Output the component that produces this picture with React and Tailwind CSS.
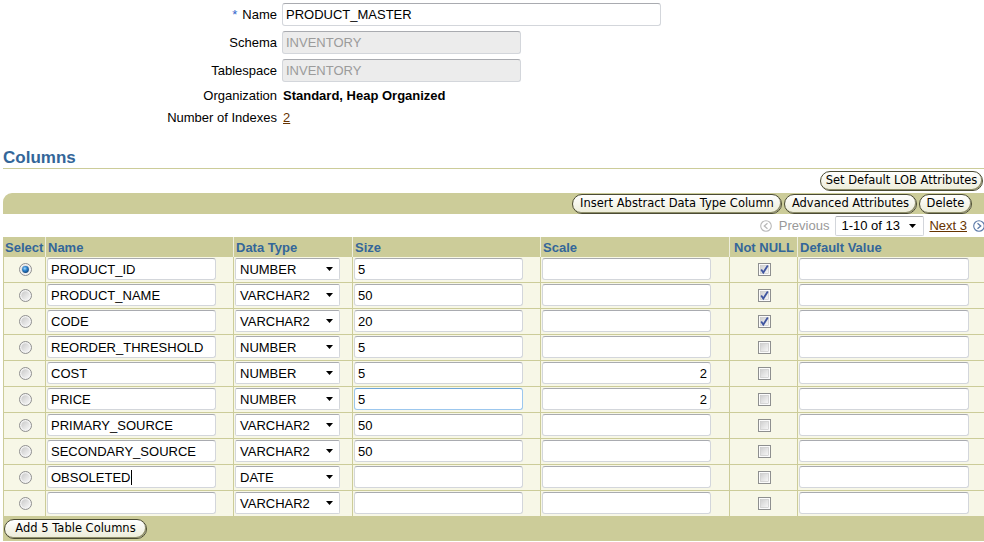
import React from "react";

const rows = [
  { name: "PRODUCT_ID", type: "NUMBER", size: "5", scale: "", nn: true, sel: true },
  { name: "PRODUCT_NAME", type: "VARCHAR2", size: "50", scale: "", nn: true },
  { name: "CODE", type: "VARCHAR2", size: "20", scale: "", nn: true },
  { name: "REORDER_THRESHOLD", type: "NUMBER", size: "5", scale: "" },
  { name: "COST", type: "NUMBER", size: "5", scale: "2" },
  { name: "PRICE", type: "NUMBER", size: "5", scale: "2", focus: true },
  { name: "PRIMARY_SOURCE", type: "VARCHAR2", size: "50", scale: "" },
  { name: "SECONDARY_SOURCE", type: "VARCHAR2", size: "50", scale: "" },
  { name: "OBSOLETED", type: "DATE", size: "", scale: "", cursor: true },
  { name: "", type: "VARCHAR2", size: "", scale: "" },
];

function Box({ w, h = "h-[22px]", value, right, focus, disabled, cursor }) {
  const border = focus
    ? "border-[#9cc7ee] border-t-[#6ea6d8]"
    : "border-[#d3d6db] border-t-[#a9abb0]";
  const bg = disabled ? "bg-[#ececec] text-[#9b9b9b]" : "bg-white text-black";
  return (
    <div
      className={`${w} ${h} ${border} ${bg} border rounded-[3px] flex items-center px-[3px] ${right ? "justify-end" : "justify-start"}`}
    >
      <span className="whitespace-pre">{value}</span>
      {cursor && <span className="w-px h-[15px] bg-black ml-px" />}
    </div>
  );
}

function Arrow() {
  return (
    <svg width="8" height="4" viewBox="0 0 8 4" className="shrink-0">
      <path d="M0 0 H7 L3.5 4 Z" fill="#000" />
    </svg>
  );
}

function Select({ w, value }) {
  return (
    <div className={`${w} h-[22px] border border-[#d3d6db] border-t-[#a9abb0] rounded-[2px] bg-white flex items-center justify-between pl-[4px] pr-[5px]`}>
      <span>{value}</span>
      <Arrow />
    </div>
  );
}

function Radio({ sel, id }) {
  return (
    <svg width="13" height="13" viewBox="0 0 13 13">
      <defs>
        <linearGradient id={`rg${id}`} x1="0" y1="0" x2="1" y2="1">
          <stop offset="0" stopColor="#c9c9c9" />
          <stop offset="1" stopColor="#f7f7f7" />
        </linearGradient>
        <radialGradient id={`rs${id}`} cx="0.4" cy="0.35" r="0.7">
          <stop offset="0" stopColor="#a6dcff" />
          <stop offset="0.45" stopColor="#2d84cf" />
          <stop offset="1" stopColor="#0f3f73" />
        </radialGradient>
      </defs>
      <circle cx="6.5" cy="6.5" r="6" fill="#f3f3f3" stroke="#8f8f8f" />
      <circle cx="6.5" cy="6.5" r="4.2" fill={`url(#rg${id})`} />
      {sel && <circle cx="6.5" cy="6.5" r="3.4" fill={`url(#rs${id})`} />}
    </svg>
  );
}

function Check({ on, id }) {
  return (
    <svg width="13" height="13" viewBox="0 0 13 13">
      <defs>
        <linearGradient id={`cg${id}`} x1="0" y1="0" x2="1" y2="1">
          <stop offset="0" stopColor="#cfcfcf" />
          <stop offset="1" stopColor="#f8f8f8" />
        </linearGradient>
      </defs>
      <rect x="0.5" y="0.5" width="12" height="12" fill="#fbfbfb" stroke="#8e8f8f" />
      <rect x="2.5" y="2.5" width="8" height="8" fill={`url(#cg${id})`} stroke="#c4c4c4" strokeWidth="0.6" />
      {on && (
        <path d="M3.2 6.6 L5.3 9.6 L9.8 2.6" fill="none" stroke="#3f55a0" strokeWidth="1.8" />
      )}
    </svg>
  );
}

function Btn({ w, children }) {
  return (
    <div
      className={`${w} h-[20px] shrink-0 rounded-full border border-[#4b4b33] bg-linear-to-b from-[#ffffff] to-[#ececd8] shadow-[inset_-1px_-1px_0_#8f8f6a] flex items-center justify-center font-['DejaVu_Sans',Verdana,sans-serif] text-[11.5px] text-black`}
    >
      {children}
    </div>
  );
}

function CircleIcon({ dir, color }) {
  return (
    <svg width="12" height="12" viewBox="0 0 12 12" className="shrink-0">
      <circle cx="6" cy="6" r="5.3" fill="none" stroke={color} strokeWidth="1.1" />
      {dir === "left" ? (
        <path d="M7.5 3.3 L4.3 6 L7.5 8.7" fill="none" stroke={color} strokeWidth="1.3" />
      ) : (
        <path d="M4.5 3.3 L7.7 6 L4.5 8.7" fill="none" stroke={color} strokeWidth="1.3" />
      )}
    </svg>
  );
}

function FormRow({ label, h, children }) {
  return (
    <div className={`flex items-center gap-[5px] ${h}`}>
      <div className="w-[277px] text-right whitespace-nowrap">{label}</div>
      {children}
    </div>
  );
}

export default function App() {
  return (
    <div className="w-[984px] h-[542px] overflow-hidden bg-white text-black font-['Liberation_Sans',Arial,sans-serif] text-[13px] leading-none">
      {/* Form */}
      <div className="flex flex-col">
        <FormRow
          h="h-[28px]"
          label={
            <>
              <span className="text-[#3366cc] mr-[5px]">*</span>Name
            </>
          }
        >
          <Box w="w-[379px]" h="h-[23px]" value="PRODUCT_MASTER" />
        </FormRow>
        <FormRow h="h-[28px]" label="Schema">
          <Box w="w-[239px]" h="h-[23px]" value="INVENTORY" disabled />
        </FormRow>
        <FormRow h="h-[28px]" label="Tablespace">
          <Box w="w-[239px]" h="h-[23px]" value="INVENTORY" disabled />
        </FormRow>
        <FormRow h="h-[23px]" label="Organization">
          <span className="font-bold pl-[1px]">Standard, Heap Organized</span>
        </FormRow>
        <FormRow h="h-[21px]" label="Number of Indexes">
          <span className="underline text-[#663300] pl-[1px]">2</span>
        </FormRow>
      </div>

      {/* Section heading */}
      <div className="mt-[20px] ml-[3px] h-[21px] border-b border-[#cccc99] flex items-center">
        <h2 className="text-[17px] font-bold text-[#336699] leading-[20px]">Columns</h2>
      </div>

      {/* Top buttons */}
      <div className="mt-[2px] flex justify-end pr-[1px]">
        <Btn w="w-[163px]">Set Default LOB Attributes</Btn>
      </div>
      <div className="mt-[2px] ml-[3px] h-[21px] bg-[#cccc99] rounded-tl-[9px] flex items-center justify-end gap-[2px] pr-[12px]">
        <Btn w="w-[210px]">Insert Abstract Data Type Column</Btn>
        <Btn w="w-[133px]">Advanced Attributes</Btn>
        <Btn w="w-[53px]">Delete</Btn>
      </div>

      {/* Pagination */}
      <div className="h-[23px] flex items-center justify-end mr-[-1px]">
        <CircleIcon dir="left" color="#b9b9b9" />
        <span className="ml-[7px] text-[#999999]">Previous</span>
        <div className="ml-[6px] w-[89px] h-[20px] border border-[#d3d6db] border-t-[#a9abb0] rounded-[2px] bg-white flex items-center justify-between pl-[5px] pr-[6px]">
          <span>1-10 of 13</span>
          <Arrow />
        </div>
        <span className="ml-[5px] underline text-[#663300]">Next 3</span>
        <span className="ml-[6px]">
          <CircleIcon dir="right" color="#5b79a8" />
        </span>
      </div>

      {/* Table */}
      <div className="ml-[3px]">
        <div className="h-[20px] flex bg-[#cccc99] text-[#336699] font-bold">
          <div className="w-[42px] pl-[2px] flex items-center">Select</div>
          <div className="w-[188px] border-l border-[#eeeedd] pl-[2px] flex items-center">Name</div>
          <div className="w-[119px] border-l border-[#eeeedd] pl-[2px] flex items-center">Data Type</div>
          <div className="w-[188px] border-l border-[#eeeedd] pl-[2px] flex items-center">Size</div>
          <div className="w-[189px] border-l border-[#eeeedd] pl-[2px] flex items-center">Scale</div>
          <div className="w-[68px] border-l border-[#eeeedd] pl-[4px] flex items-center">Not NULL</div>
          <div className="flex-1 border-l border-[#eeeedd] pl-[2px] flex items-center">Default Value</div>
        </div>
        {rows.map((r, i) => (
          <div key={i} className="h-[26px] flex bg-[#f7f7e7] border-l border-b border-[#cccc99]">
            <div className="w-[41px] flex items-center justify-center pl-[1px]">
              <Radio sel={r.sel} id={i} />
            </div>
            <div className="w-[188px] border-l border-[#cccc99] pl-px pt-px">
              <Box w="w-[169px]" value={r.name} cursor={r.cursor} />
            </div>
            <div className="w-[119px] border-l border-[#cccc99] pl-px pt-px">
              <Select w="w-[105px]" value={r.type} />
            </div>
            <div className="w-[188px] border-l border-[#cccc99] pl-px pt-px">
              <Box w="w-[169px]" value={r.size} focus={r.focus} />
            </div>
            <div className="w-[189px] border-l border-[#cccc99] pl-px pt-px">
              <Box w="w-[169px]" value={r.scale} right />
            </div>
            <div className="w-[68px] border-l border-[#cccc99] flex items-center justify-center pl-px">
              <Check on={r.nn} id={i} />
            </div>
            <div className="flex-1 border-l border-[#cccc99] pl-px pt-px">
              <Box w="w-[170px]" value="" />
            </div>
          </div>
        ))}
        <div className="h-[24px] bg-[#cccc99] flex items-center pl-[1px]">
          <Btn w="w-[143px]">Add 5 Table Columns</Btn>
        </div>
      </div>
      <div className="h-[4px] pl-[835px]">
        <div className="w-[89px] border-t border-[#a9abb0] mt-px" />
      </div>
    </div>
  );
}
